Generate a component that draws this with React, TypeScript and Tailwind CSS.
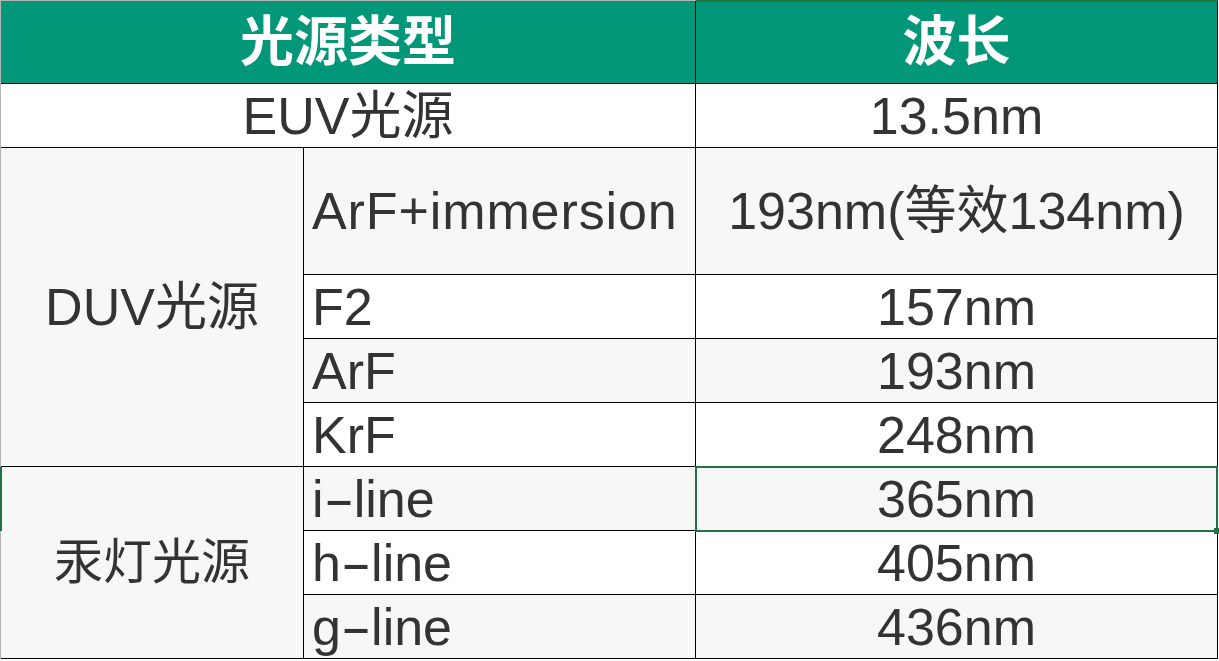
import React from "react";

const font = { fontFamily: '"Liberation Sans", "Noto Sans CJK SC", sans-serif' };

function Dash() {
  return <span className="inline-block w-[0.58em] text-center scale-x-[1.8]">-</span>;
}

export default function App() {
  const base = "flex items-center border-r border-b border-black leading-none text-[#333333]";
  const cell = `${base} text-[52px]`;
  const gray = "bg-[#f7f7f7]";
  const white = "bg-white";
  return (
    <div className="relative w-[1219px] h-[661px] bg-white overflow-hidden" style={font}>
      <div className="grid grid-cols-[303px_392px_522px] grid-rows-[83px_64px_127px_64px_64px_64px_64px_64px_64px] w-[1218px] border-t border-l border-[#b4b4b4]">
        <div className="col-span-2 flex items-center justify-center border-r border-b border-black bg-[#03977a] text-white font-bold text-[54px] leading-none">光源类型</div>
        <div className="flex items-center justify-center border-r border-b border-black bg-[#03977a] text-white font-bold text-[54px] leading-none">波长</div>

        <div className={`${cell} ${white} col-span-2 justify-center`}>EUV光源</div>
        <div className={`${cell} ${white} justify-center`}>13.5nm</div>

        <div className={`${cell} ${gray} row-span-4 justify-center`}>DUV光源</div>
        <div className={`${cell} ${gray} pl-2 tracking-[0.9px]`}>ArF+immersion</div>
        <div className={`${cell} ${gray} justify-center`}>193nm(等效134nm)</div>

        <div className={`${cell} ${white} pl-2`}>F2</div>
        <div className={`${cell} ${white} justify-center`}>157nm</div>

        <div className={`${cell} ${gray} pl-2`}>ArF</div>
        <div className={`${cell} ${gray} justify-center`}>193nm</div>

        <div className={`${cell} ${white} pl-2`}>KrF</div>
        <div className={`${cell} ${white} justify-center`}>248nm</div>

        <div className={`${base} text-[49px] ${gray} row-span-3 justify-center`}>汞灯光源</div>
        <div className={`${cell} ${gray} pl-2`}>i<Dash />line</div>
        <div className={`${cell} ${gray} justify-center`}>365nm</div>

        <div className={`${cell} ${white} pl-2`}>h<Dash />line</div>
        <div className={`${cell} ${white} justify-center`}>405nm</div>

        <div className={`${cell} ${gray} pl-2`}>g<Dash />line</div>
        <div className={`${cell} ${gray} justify-center`}>436nm</div>
      </div>

      {/* selection overlays */}
      <div className="absolute left-[696px] top-0 w-[522px] h-[2px] bg-[#217346]" />
      <div className="absolute left-0 top-[467px] w-[2px] h-[64px] bg-[#217346]" />
      <div className="absolute left-[695px] top-[466px] w-[523px] h-[66px] border-2 border-[#217346]" />
      <div className="absolute left-[1214px] top-[528px] w-[6px] h-[6px] bg-[#217346]" />
    </div>
  );
}
